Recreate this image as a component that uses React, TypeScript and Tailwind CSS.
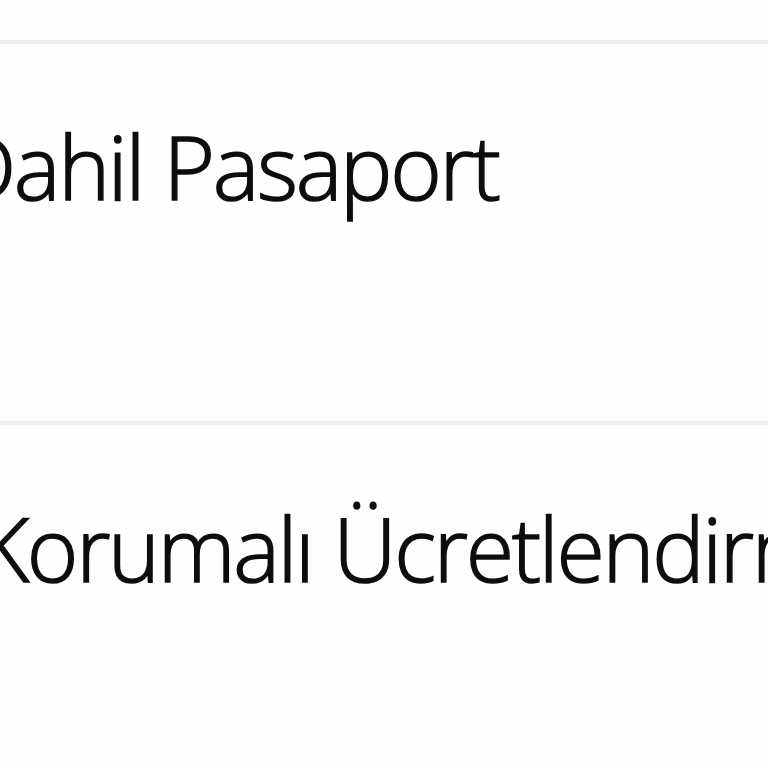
export default function App() {
  const font = { fontFamily: '"Open Sans", "Noto Sans", sans-serif' };
  return (
    <div className="w-[768px] h-[768px] overflow-hidden bg-[#fefefe] text-[#0d0d0d]" style={font}>
      <div className="h-[40px]" />
      <div className="border-t-4 border-[#ececec]">
        <div className="pt-[78px] pb-[211px] ml-[-46px] whitespace-nowrap text-[88px] leading-none font-light tracking-[-2.3px] [-webkit-text-stroke:1.5px_#0d0d0d]">
          Dahil Pasaport
        </div>
      </div>
      <div className="border-t-4 border-[#efefef]">
        <div className="pt-[79px] ml-[-22px] whitespace-nowrap text-[88px] leading-none font-light tracking-[-2.3px] [-webkit-text-stroke:1.5px_#0d0d0d]">
          Korumalı Ücretlendirme
        </div>
      </div>
    </div>
  );
}
